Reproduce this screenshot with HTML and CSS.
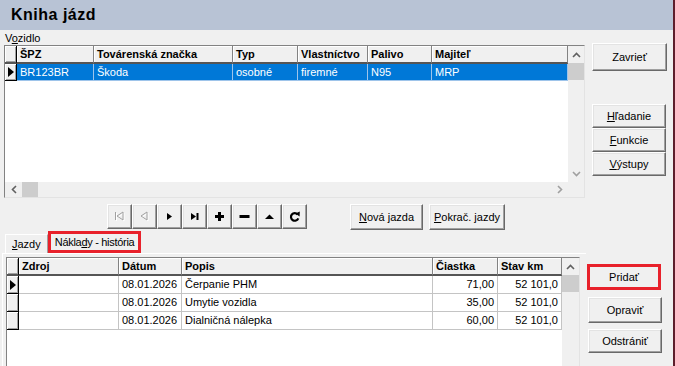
FILE: index.html
```html
<!DOCTYPE html>
<html lang="sk">
<head>
    <meta charset="UTF-8">
    <meta name="viewport" content="width=device-width, initial-scale=1.0">
    <title>Kniha jázd</title>
    <link rel="stylesheet" href="styles.css">
</head>
<body>
<div class="app">
    <div class="titlebar">Kniha jázd</div>
    <div class="main">
        <!-- Left side: vehicles + costs -->
        <div class="left">
            <div class="caption">V<u>o</u>zidlo</div>
            <div class="grid grid-veh">
                <div class="grid-body">
                    <table class="tbl">
                        <colgroup>
                            <col style="width:12px"><col style="width:77px"><col style="width:139px"><col style="width:65px"><col style="width:70px"><col style="width:64px"><col style="width:136px">
                        </colgroup>
                        <thead>
                            <tr><th class="ind"></th><th>ŠPZ</th><th>Továrenská značka</th><th>Typ</th><th>Vlastníctvo</th><th>Palivo</th><th>Majiteľ</th></tr>
                        </thead>
                        <tbody>
                            <tr class="sel"><td class="ind"><span class="arrow"></span></td><td>BR123BR</td><td>Škoda</td><td>osobné</td><td>firemné</td><td>N95</td><td>MRP</td></tr>
                        </tbody>
                    </table>
                    <div class="vscroll">
                        <div class="sb-btn"><svg width="9" height="6"><polyline points="1,5 4.5,1.5 8,5" fill="none" stroke="#606060" stroke-width="1.6"/></svg></div>
                        <div class="thumb"></div>
                        <div class="sb-fill"></div>
                        <div class="sb-btn"><svg width="9" height="6"><polyline points="1,1 4.5,4.5 8,1" fill="none" stroke="#a0a0a0" stroke-width="1.6"/></svg></div>
                    </div>
                </div>
                <div class="hscroll">
                    <div class="sb-btn h"><svg width="6" height="9"><polyline points="5,1 1.5,4.5 5,8" fill="none" stroke="#606060" stroke-width="1.6"/></svg></div>
                    <div class="thumb h"></div>
                    <div class="sb-fill"></div>
                    <div class="sb-btn h"><svg width="6" height="9"><polyline points="1,1 4.5,4.5 1,8" fill="none" stroke="#a0a0a0" stroke-width="1.6"/></svg></div>
                    <div class="corner"></div>
                </div>
            </div>

            <div class="navrow">
                <div class="navigator">
                    <button class="nav-btn"><svg width="13" height="13"><g fill="none" stroke="#fff"><path d="M3.5 3v8"/><polygon points="11,3 5,7 11,11"/></g><g fill="none" stroke="#a0a0a0"><path d="M2.5 2v8"/><polygon points="10,2 4,6 10,10"/></g></svg></button>
                    <button class="nav-btn"><svg width="13" height="13"><polygon points="10,3 4,7 10,11" fill="none" stroke="#fff"/><polygon points="9,2 3,6 9,10" fill="none" stroke="#a0a0a0"/></svg></button>
                    <button class="nav-btn"><svg width="13" height="13"><polygon points="4,3 9,6.5 4,10" fill="#000"/></svg></button>
                    <button class="nav-btn"><svg width="13" height="13"><polygon points="3,3 8,6.5 3,10" fill="#000"/><rect x="8.5" y="3" width="2" height="7" fill="#000"/></svg></button>
                    <button class="nav-btn"><svg width="13" height="13"><rect x="2" y="5" width="9" height="3" fill="#000"/><rect x="5" y="2" width="3" height="9" fill="#000"/></svg></button>
                    <button class="nav-btn"><svg width="13" height="13"><rect x="1.5" y="5" width="10" height="3" fill="#000"/></svg></button>
                    <button class="nav-btn"><svg width="13" height="13"><polygon points="2,9 6.5,4.5 11,9" fill="#000"/></svg></button>
                    <button class="nav-btn"><svg width="13" height="13"><path d="M9.6 4.4 A3.8 3.8 0 1 0 10.3 8.4" fill="none" stroke="#000" stroke-width="2.2"/><polygon points="7.4,3.6 11.8,1.6 11.6,6.4" fill="#000"/></svg></button>
                </div>
                <button class="btn btn-new"><u>N</u>ová jazda</button>
                <button class="btn btn-cont"><u>P</u>okrač. jazdy</button>
            </div>

            <div class="tabs">
                <div class="tab"><u>J</u>azdy</div>
                <div class="tab active">Nákla<u>d</u>y - história</div>
            </div>

            <div class="tab-panel">
                <div class="grid grid-cost">
                    <table class="tbl">
                        <colgroup>
                            <col style="width:12px"><col style="width:100px"><col style="width:63px"><col style="width:251px"><col style="width:65px"><col style="width:64px">
                        </colgroup>
                        <thead>
                            <tr><th class="ind"></th><th>Zdroj</th><th>Dátum</th><th>Popis</th><th>Čiastka</th><th>Stav km</th></tr>
                        </thead>
                        <tbody>
                            <tr><td class="ind"><span class="arrow"></span></td><td></td><td>08.01.2026</td><td>Čerpanie PHM</td><td class="num">71,00</td><td class="num">52 101,0</td></tr>
                            <tr><td class="ind"></td><td></td><td>08.01.2026</td><td>Umytie vozidla</td><td class="num">35,00</td><td class="num">52 101,0</td></tr>
                            <tr><td class="ind"></td><td></td><td>08.01.2026</td><td>Dialničná nálepka</td><td class="num">60,00</td><td class="num">52 101,0</td></tr>
                        </tbody>
                    </table>
                    <div class="vscroll">
                        <div class="sb-btn"><svg width="9" height="6"><polyline points="1,5 4.5,1.5 8,5" fill="none" stroke="#606060" stroke-width="1.6"/></svg></div>
                        <div class="thumb"></div>
                        <div class="sb-fill"></div>
                    </div>
                </div>
            </div>
        </div>

        <!-- Right side: command buttons -->
        <div class="right">
            <button class="btn btn-close">Zavrieť</button>
            <div class="btn-stack">
                <button class="btn"><u>H</u>ľadanie</button>
                <button class="btn"><u>F</u>unkcie</button>
                <button class="btn"><u>V</u>ýstupy</button>
            </div>
            <button class="btn btn-add marked">Pridať</button>
            <button class="btn btn-edit">Opraviť</button>
            <button class="btn btn-del">Odstrániť</button>
        </div>
    </div>
</div>
</body>
</html>
```

FILE: styles.css
```css
body {
    margin: 0;
    background-color: #f0f0f0;
    font-family: "Liberation Sans", Arial, sans-serif;
    font-size: 11px;
    color: #000;
}
.app {
    width: 673px;
    height: 366px;
    border-right: 2px solid #5e1e2c;
    overflow: hidden;
    display: flex;
    flex-direction: column;
}
.titlebar {
    height: 30px;
    flex: none;
    background-color: #b8c3d5;
    padding-left: 11px;
    font-family: "Liberation Sans", Arial, sans-serif;
    font-weight: bold;
    font-size: 16px;
    letter-spacing: 0.5px;
    line-height: 30px;
}
.main {
    flex: 1;
    display: flex;
}
.left {
    width: 587px;
    flex: none;
    display: flex;
    flex-direction: column;
}
.right {
    flex: 1;
    display: flex;
    flex-direction: column;
    align-items: flex-start;
}
.caption {
    height: 15px;
    line-height: 17px;
    padding-left: 5px;
}
u {
    text-decoration: underline;
    text-underline-offset: 1px;
}

/* grids */
.grid {
    background-color: #fff;
    border: 1px solid;
    border-color: #828282 #e3e3e3 #e3e3e3 #828282;
}
.grid-veh {
    margin-left: 4px;
    width: 579px;
    height: 151px;
    display: flex;
    flex-direction: column;
}
.grid-body {
    flex: 1;
    display: flex;
}
.grid-veh .tbl {
    width: 563px;
}
.tbl {
    border-collapse: separate;
    border-spacing: 0;
    table-layout: fixed;
    align-self: flex-start;
}
.tbl th, .tbl td {
    box-sizing: border-box;
    padding: 0 3px;
    white-space: nowrap;
    overflow: hidden;
    text-align: left;
}
.tbl th {
    height: 18px;
    background-color: #f0f0f0;
    font-weight: bold;
    border-right: 1px solid #828282;
    border-bottom: 2px solid #555;
    box-shadow: inset 1px 1px #fff;
    line-height: 15px;
}
.tbl td {
    height: 17px;
    border-right: 1px solid #c4c4c4;
    border-bottom: 1px solid #c4c4c4;
    line-height: 16px;
}
.tbl .ind {
    padding: 0;
    background-color: #f0f0f0;
    border-right: 1px solid #000;
    box-shadow: inset 1px 1px #fff, inset -1px -1px #a0a0a0;
}
.tbl td.ind {
    border-bottom: 1px solid #000;
}
.arrow {
    display: block;
    width: 0;
    height: 0;
    margin-left: 3px;
    border-left: 6px solid #000;
    border-top: 5px solid transparent;
    border-bottom: 5px solid transparent;
}
.tbl tr.sel td {
    background-color: #0078d7;
    color: #fff;
    border-right-color: #9ec4ea;
    border-bottom-color: #9ec4ea;
}
.tbl tr.sel td.ind {
    background-color: #f0f0f0;
    border-right-color: #000;
    border-bottom-color: #000;
}
.tbl td.num {
    text-align: right;
}

/* scrollbars */
.vscroll {
    width: 16px;
    background-color: #f0f0f0;
    display: flex;
    flex-direction: column;
    margin-left: auto;
}
.sb-btn {
    height: 17px;
    flex: none;
    display: flex;
    align-items: center;
    justify-content: center;
}
.sb-btn.h {
    width: 17px;
    height: auto;
}
.thumb {
    height: 17px;
    flex: none;
    background-color: #cdcdcd;
}
.thumb.h {
    width: 16px;
    height: auto;
}
.sb-fill {
    flex: 1;
}
.hscroll {
    height: 15px;
    flex: none;
    display: flex;
    background-color: #f0f0f0;
}
.corner {
    width: 16px;
}

/* navigator + buttons */
.navrow {
    display: flex;
    margin-top: 6px;
    height: 25px;
}
.navigator {
    display: flex;
    margin-left: 107px;
}
button {
    font-family: "Liberation Sans", Arial, sans-serif;
    font-size: 11px;
    color: #000;
    padding: 0;
    background-color: #f0f0f0;
    border: 1px solid;
    border-color: #fff #696969 #696969 #fff;
    box-shadow: inset -1px -1px #a0a0a0, inset 1px 1px #e3e3e3;
}
.nav-btn {
    width: 25px;
    height: 25px;
    display: flex;
    align-items: center;
    justify-content: center;
}
.btn-new {
    margin-left: 43px;
    width: 73px;
    height: 25px;
}
.btn-cont {
    margin-left: 6px;
    width: 76px;
    height: 25px;
}

/* tabs */
.tabs {
    display: flex;
    align-items: flex-end;
    margin-top: 2px;
    height: 22px;
    padding-left: 5px;
}
.tab {
    height: 19px;
    line-height: 19px;
    padding: 0 6px;
    white-space: nowrap;
    border-top: 1px solid #fff;
    border-left: 1px solid #fff;
    border-right: 1px solid #a0a0a0;
    box-sizing: border-box;
}
.tab.active {
    height: 22px;
    line-height: 20px;
    padding: 0 6px;
    letter-spacing: -0.3px;
    outline: 3px solid #e8212b;
    outline-offset: -3px;
}
.tab-panel {
    flex: 1;
    margin-left: 2px;
    width: 580px;
    border-top: 1px solid #fff;
    border-left: 1px solid #fff;
    padding: 3px 0 0 3px;
}
.grid-cost {
    width: 572px;
    height: 120px;
    display: flex;
    border-bottom: none;
}
.grid-cost .tbl {
    width: 555px;
}
.grid-cost .vscroll {
    width: 17px;
}
.grid-cost .tbl td {
    height: 18px;
    line-height: 17px;
}

/* right column */
.btn {
    height: 26px;
}
.btn-close {
    margin: 13px 0 0 5px;
    width: 75px;
    height: 28px;
}
.btn-stack {
    margin: 33px 0 0 5px;
    display: flex;
    flex-direction: column;
}
.btn-stack .btn {
    width: 74px;
    height: 24px;
}
.btn-add {
    margin: 88px 0 0 0;
    width: 74px;
    height: 26px;
}
.marked {
    outline: 3px solid #e8212b;
    outline-offset: -3px;
}
.btn-edit {
    margin: 7px 0 0 1px;
    width: 74px;
}
.btn-del {
    margin: 6px 0 0 1px;
    width: 74px;
    height: 24px;
}
```
